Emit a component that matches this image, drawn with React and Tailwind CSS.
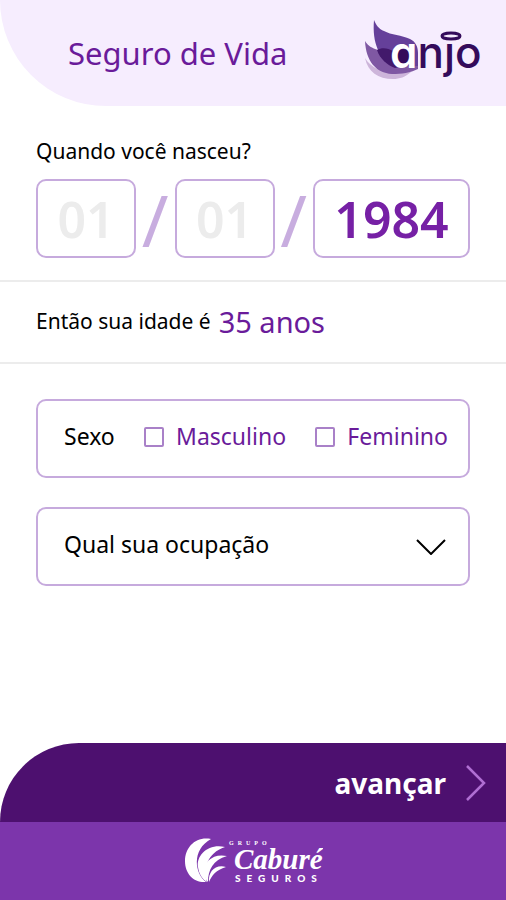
import React, { useState } from 'react';

const AnjoLogo = () => (
  <svg viewBox="0 -3 118 66" className="w-[118px] h-[66px] shrink-0" role="img" aria-label="anjo">
    <path d="M1 35c3 5 7 8 12 11l34 3C41 54 36 56 29 56 14 56 4 49 1 35Z" fill="#cdb5da" />
    <path d="M1 18c3 5 7 7 13 9l40 8v11c-8 4-16 5-26 5C12 50 2 38 1 18Z" fill="#7f58a3" />
    <path d="M10-3c2 5 5 9 10 11 7 4 18 4 26 8 6 3 8 8 8 14v13H32C15 37 8 20 10-3Z" fill="#65409a" />
    <path d="M13 27c5-3 11-2 16 1l11 15-9 2C23 42 16 36 13 27Z" fill="#42196b" />
    <circle cx="39" cy="34" r="8" fill="#340b5b" />
    <text
      x="26"
      y="45"
      fontSize="44"
      className="font-[Inter,sans-serif] font-medium [font-feature-settings:'cv11']"
    >
      <tspan fill="#ffffff" className="font-semibold">a</tspan>
      <tspan fill="#340b5b">nȷo</tspan>
    </text>
    <ellipse cx="87" cy="13" rx="9" ry="3" fill="none" stroke="#340b5b" strokeWidth="3" />
  </svg>
);

const CabureLogo = () => (
  <svg viewBox="0 0 140 50" className="w-[140px] h-[50px]" role="img" aria-label="Grupo Caburé Seguros">
    <g fill="#ffffff">
      <path d="M28 3C13 0 2 11 2 25c0 13 9 22 21 21C12 38 8 14 28 3Z" />
      <path d="M42 11C26 7 13 19 15 31c1 7 4 12 9 15-4-13 0-29 18-35Z" />
      <path d="M44 20C30 17 21 26 21 35c0 5 2 9 4 11 0-12 5-22 19-26Z" />
      <path d="M43 31c-11-3-18 5-17 15 3-7 7-12 17-15Z" />
    </g>
    <g fill="#ffffff" className="font-['Liberation_Serif',serif] font-bold">
      <text x="46" y="9" fontSize="6" letterSpacing="4">GRUPO</text>
      <text x="51" y="33" fontSize="29" fontStyle="italic">Caburé</text>
    </g>
    <text x="52" y="46" fontSize="10" letterSpacing="6" fill="#ffffff" className="font-[Lato,sans-serif] font-black">
      SEGUROS
    </text>
  </svg>
);

const fieldClass =
  'h-[79px] min-w-0 rounded-[10px] border-2 border-[#c6aadd] bg-white text-center text-[50px] font-semibold text-[#7620a5] placeholder-[#ececec] outline-none focus:border-[#7620a5]';

const Slash = () => (
  <span aria-hidden="true" className="flex-1 text-center text-7xl leading-none text-[#c8addf]">
    /
  </span>
);

const App = () => {
  const [day, setDay] = useState('');
  const [month, setMonth] = useState('');
  const [year, setYear] = useState('1984');
  const [gender, setGender] = useState('');
  const age = 2019 - Number(year);

  return (
    <div className="flex min-h-screen flex-col bg-white font-['Noto_Sans',sans-serif] text-black">
      <header className="flex h-[106px] items-center justify-between rounded-bl-[106px] bg-[#f6edfe] pl-[68px] pr-6">
        <h1 className="text-[31px] text-[#6a1b9a]">Seguro de Vida</h1>
        <AnjoLogo />
      </header>

      <main>
        <fieldset className="px-9 pt-[33px] pb-[22px]">
          <legend className="float-left mb-4 w-full text-[21px] leading-6">Quando você nasceu?</legend>
          <div className="clear-both flex items-center">
            <input
              aria-label="Dia"
              value={day}
              onChange={(e) => setDay(e.target.value)}
              placeholder="01"
              className={`${fieldClass} w-[100px]`}
            />
            <Slash />
            <input
              aria-label="Mês"
              value={month}
              onChange={(e) => setMonth(e.target.value)}
              placeholder="01"
              className={`${fieldClass} w-[100px]`}
            />
            <Slash />
            <input
              aria-label="Ano"
              value={year}
              onChange={(e) => setYear(e.target.value)}
              className={`${fieldClass} w-[157px]`}
            />
          </div>
        </fieldset>

        <p className="flex h-[84px] items-center gap-2 border-y-2 border-[#ececec] px-9 text-[21px]">
          <span>Então sua idade é</span>
          <span className="text-[29px] text-[#6a1b9a]">{age} anos</span>
        </p>

        <div className="flex flex-col gap-[29px] px-9 pt-[35px]">
          <div
            role="group"
            aria-label="Sexo"
            className="flex h-[79px] items-center justify-between rounded-[10px] border-2 border-[#c6aadd] pl-[26px] pr-5 pb-1 text-[23px]"
          >
            <span>Sexo</span>
            {['Masculino', 'Feminino'].map((option) => (
              <label key={option} className="flex items-center gap-3 text-[#6a1b9a]">
                <input
                  type="checkbox"
                  checked={gender === option}
                  onChange={() => setGender(gender === option ? '' : option)}
                  className="size-5 appearance-none rounded-xs border-2 border-[#a981c8] checked:bg-[#7620a5]"
                />
                {option}
              </label>
            ))}
          </div>

          <div className="relative">
            <select
              aria-label="Qual sua ocupação"
              className="h-[79px] w-full appearance-none rounded-[10px] border-2 border-[#c6aadd] bg-white pl-[26px] pr-16 pb-1 text-[23px] outline-none"
            >
              <option>Qual sua ocupação</option>
            </select>
            <svg
              viewBox="0 0 30 16"
              className="pointer-events-none absolute top-8 right-6 h-4 w-[30px]"
              fill="none"
              stroke="#000000"
              strokeWidth="2"
            >
              <path d="M1 1l14 14L29 1" />
            </svg>
          </div>
        </div>
      </main>

      <footer className="mt-auto">
        <button
          type="button"
          className="flex h-[79px] w-full items-center justify-end gap-5 rounded-tl-[79px] bg-[#4d106f] pr-5 text-[28px] font-bold text-white"
        >
          avançar
          <svg viewBox="0 0 20 36" className="h-9 w-5" fill="none" stroke="#b06fd3" strokeWidth="2.5">
            <path d="M1 1l17 17L1 35" />
          </svg>
        </button>
        <div className="flex h-[78px] items-center justify-center bg-[#7c35ab]">
          <CabureLogo />
        </div>
      </footer>
    </div>
  );
};

export default App;
